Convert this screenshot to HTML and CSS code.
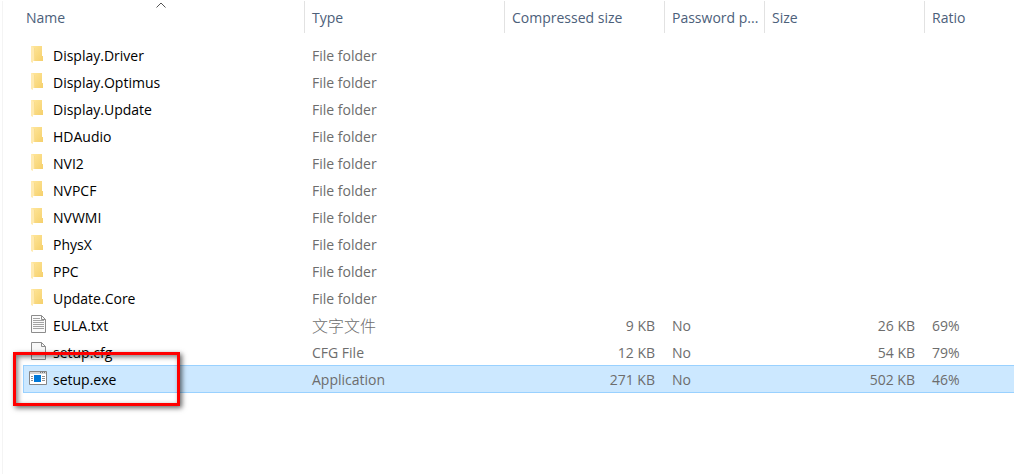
FILE: index.html
```html
<!DOCTYPE html>
<html lang="en">
<head>
  <meta charset="UTF-8" />
  <meta name="viewport" content="width=device-width, initial-scale=1" />
  <title>Display.Driver</title>
  <link rel="stylesheet" href="styles.css">
</head>
<body>

<svg class="sprite" aria-hidden="true">
  <linearGradient id="folder-fill" x1="0" y1="0" x2="1" y2="1">
    <stop offset="0" stop-color="#ffe69a" />
    <stop offset="1" stop-color="#f5d06c" />
  </linearGradient>
  <symbol id="icon-folder" viewBox="0 0 18 19">
    <path d="M3 1h10v10h1v5H3z" fill="url(#folder-fill)" />
    <path d="M2 1h1l2 2v13H4v2l-2-1z" fill="#ffeab0" />
    <path d="M5.500 3v13" stroke="#f9dc8c" stroke-width="1" />
  </symbol>
  <symbol id="icon-text" viewBox="0 0 18 19">
    <path d="M2.500.5h10l4 4v13h-14z" fill="#fbfbfb" stroke="#8c8c8c" />
    <path d="M12.500.5v4h4" fill="none" stroke="#8c8c8c" />
    <path d="M4 3.500h7M4 5.500h11M4 7.500h11M4 9.500h11M4 11.500h11M4 13.500h11" stroke="#a3a3a3" />
  </symbol>
  <symbol id="icon-file" viewBox="0 0 18 19">
    <path d="M2.500.5h10l4 4v13h-14z" fill="#f8f8f8" stroke="#8c8c8c" />
    <path d="M12.500.5v4h4" fill="none" stroke="#8c8c8c" />
  </symbol>
  <symbol id="icon-exe" viewBox="0 0 18 19">
    <path d="M.5 2.500h17v13H.5z" fill="#fff" stroke="#858585" />
    <path d="M1 3h16v2H1z" fill="#d4d4d4" />
    <path d="M11 3.500h1M13 3.500h1M15 3.500h1" stroke="#777" />
    <path d="M2 7.500h2M2 9.500h2M2 11.500h2M13 7.500h3M13 9.500h3M13 11.500h3" stroke="#8f8f8f" />
    <path d="M5 6h7v7H5z" fill="#0078d7" />
  </symbol>
</svg>

<main class="file-list">
  <table>
    <colgroup>
      <col class="col-name">
      <col class="col-type">
      <col class="col-packed">
      <col class="col-password">
      <col class="col-size">
      <col>
    </colgroup>
    <thead>
      <tr>
        <th aria-sort="ascending">
          <button type="button">Name</button>
          <svg class="sort" viewBox="0 0 10 6" aria-hidden="true"><path d="M.5 5.500 5 1l4.500 4.500" fill="none" stroke="#555" /></svg>
        </th>
        <th><button type="button">Type</button></th>
        <th><button type="button">Compressed size</button></th>
        <th><button type="button">Password p...</button></th>
        <th><button type="button">Size</button></th>
        <th><button type="button">Ratio</button></th>
      </tr>
    </thead>
    <tbody>
      <tr><td><div class="name"><svg><use href="#icon-folder" /></svg>Display.Driver</div></td><td>File folder</td><td></td><td></td><td></td><td></td></tr>
      <tr><td><div class="name"><svg><use href="#icon-folder" /></svg>Display.Optimus</div></td><td>File folder</td><td></td><td></td><td></td><td></td></tr>
      <tr><td><div class="name"><svg><use href="#icon-folder" /></svg>Display.Update</div></td><td>File folder</td><td></td><td></td><td></td><td></td></tr>
      <tr><td><div class="name"><svg><use href="#icon-folder" /></svg>HDAudio</div></td><td>File folder</td><td></td><td></td><td></td><td></td></tr>
      <tr><td><div class="name"><svg><use href="#icon-folder" /></svg>NVI2</div></td><td>File folder</td><td></td><td></td><td></td><td></td></tr>
      <tr><td><div class="name"><svg><use href="#icon-folder" /></svg>NVPCF</div></td><td>File folder</td><td></td><td></td><td></td><td></td></tr>
      <tr><td><div class="name"><svg><use href="#icon-folder" /></svg>NVWMI</div></td><td>File folder</td><td></td><td></td><td></td><td></td></tr>
      <tr><td><div class="name"><svg><use href="#icon-folder" /></svg>PhysX</div></td><td>File folder</td><td></td><td></td><td></td><td></td></tr>
      <tr><td><div class="name"><svg><use href="#icon-folder" /></svg>PPC</div></td><td>File folder</td><td></td><td></td><td></td><td></td></tr>
      <tr><td><div class="name"><svg><use href="#icon-folder" /></svg>Update.Core</div></td><td>File folder</td><td></td><td></td><td></td><td></td></tr>
      <tr><td><div class="name"><svg><use href="#icon-text" /></svg>EULA.txt</div></td><td class="cjk" lang="zh">文字文件</td><td class="num">9 KB</td><td>No</td><td class="num">26 KB</td><td>69%</td></tr>
      <tr><td><div class="name"><svg><use href="#icon-file" /></svg>setup.cfg</div></td><td>CFG File</td><td class="num">12 KB</td><td>No</td><td class="num">54 KB</td><td>79%</td></tr>
      <tr class="selected"><td><div class="name"><svg><use href="#icon-exe" /></svg>setup.exe<span class="marker"></span></div></td><td>Application</td><td class="num">271 KB</td><td>No</td><td class="num">502 KB</td><td>46%</td></tr>
    </tbody>
  </table>
</main>

</body>
</html>
```
FILE: styles.css
```css
body {
  margin: 0;
  background: #fff;
  color: #6d6d6d;
  font-family: "Open Sans", "Noto Sans", sans-serif;
  font-size: 14px;
}

.sprite {
  position: absolute;
  width: 0;
  height: 0;
}

.file-list {
  box-sizing: border-box;
  min-height: calc(100vh - 1px);
  margin: 1px 0 0 2px;
  padding-left: 20px;
  border-left: 1px solid #f4f4f4;
}

table {
  width: 100%;
  table-layout: fixed;
  border-spacing: 0;
}
.col-name {
  width: 281px;
}
.col-type {
  width: 200px;
}
.col-packed,
.col-size {
  width: 160px;
}
.col-password {
  width: 100px;
}

th {
  position: relative;
  padding: 0 0 9px;
}
th button {
  display: block;
  width: 100%;
  height: 32px;
  padding: 0 0 0 7px;
  border: none;
  border-left: 1px solid #e2e2e2;
  background: none;
  color: #4c607a;
  font: inherit;
  font-weight: 400;
  text-align: left;
  white-space: nowrap;
}
th:first-child button {
  padding-left: 3px;
  border-left: none;
}
.sort {
  position: absolute;
  top: 1px;
  left: 133px;
  width: 10px;
  height: 6px;
}

td {
  height: 27px;
  padding: 0 8px;
  line-height: 27px;
  white-space: nowrap;
}
td:first-child {
  padding: 0 0 0 6px;
}
.name {
  display: flex;
  align-items: center;
  gap: 6px;
  height: 27px;
  color: #000;
}
.name svg {
  width: 18px;
  height: 19px;
  margin-bottom: 2px;
}
.num {
  padding-right: 9px;
  text-align: right;
}
.cjk {
  font-family: "Noto Sans CJK TC", sans-serif;
  font-size: 16px;
  font-weight: 300;
}

.selected td {
  background: #cce8ff;
  box-shadow: 0 -1px #99d1ff, inset 0 -1px #99d1ff;
}
.selected td:first-child {
  box-shadow: 0 -1px #99d1ff, inset 1px -1px #99d1ff;
}
.selected .name {
  position: relative;
}

/* red frame around the installer */
.marker {
  position: absolute;
  top: -14px;
  left: -16px;
  box-sizing: border-box;
  width: 167px;
  height: 54px;
  border: 3px solid #f00;
  box-shadow: 2px 2px 5px rgba(0, 0, 0, 0.6), inset 2px 2px 5px rgba(0, 0, 0, 0.5);
}
```
